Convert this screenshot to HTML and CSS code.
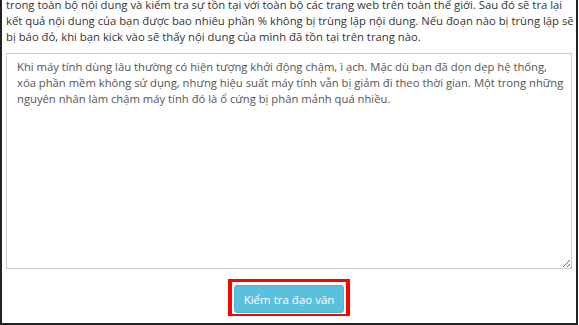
FILE: index.html
```html
<!DOCTYPE html>
<html lang="vi">
<head>
<meta charset="utf-8">
<link rel="stylesheet" href="styles.css">
</head>
<body>
<div class="frame">
  <p class="intro">trong toàn bộ nội dung và kiểm tra sự tồn tại với toàn bộ các trang web trên toàn thế giới. Sau đó sẽ tra lại<br>kết quả nội dung của bạn được bao nhiêu phần % không bị trùng lặp nội dung. Nếu đoạn nào bị trùng lặp sẽ<br>bị báo đỏ, khi bạn kick vào sẽ thấy nội dung của mình đã tồn tại trên trang nào.</p>
  <textarea class="input">Khi máy tính dùng lâu thường có hiện tượng khởi động chậm, ì ạch. Mặc dù bạn đã dọn dẹp hệ thống, xóa phần mềm không sử dụng, nhưng hiệu suất máy tính vẫn bị giảm đi theo thời gian. Một trong những nguyên nhân làm chậm máy tính đó là ổ cứng bị phân mảnh quá nhiều.</textarea>
  <div class="actions">
    <div class="highlight">
      <button class="btn">Kiểm tra đạo văn</button>
    </div>
  </div>
</div>
</body>
</html>
```

FILE: styles.css
```css
html, body {
  margin: 0;
  padding: 0;
  background: #fff;
}
body {
  width: 579px;
  height: 325px;
  overflow: hidden;
  font-family: "Open Sans", "Liberation Sans", sans-serif;
}
.frame {
  box-sizing: border-box;
  width: 578px;
  height: 325px;
  border-left: 2px solid #222;
  border-right: 2px solid #222;
  border-bottom: 2px solid #222;
  padding: 0 4px;
  display: flex;
  flex-direction: column;
  overflow: hidden;
}
.intro {
  margin: -3px 0 0 0;
  font-size: 11.3px;
  line-height: 16px;
  color: #333;
  white-space: nowrap;
}
.input {
  box-sizing: border-box;
  display: block;
  margin-top: 8px;
  width: 566px;
  height: 216px;
  border: 1px solid #ccc;
  padding: 5px 4px 5px 10px;
  font-family: "Open Sans", "Liberation Sans", sans-serif;
  font-size: 11.25px;
  line-height: 16px;
  color: #555;
  background: #fff;
  resize: both;
  outline: none;
}
.actions {
  display: flex;
  justify-content: center;
  margin-top: 10px;
}
.highlight {
  border-style: solid;
  border-color: #f00;
  border-width: 3px 4px 2px 4px;
  padding: 3px 2px 1px 2px;
  display: flex;
}
.btn {
  box-sizing: border-box;
  width: 110px;
  height: 28px;
  background: #5bc0de;
  border: 1px solid #46b8da;
  border-radius: 3px;
  color: #fff;
  font-family: "Open Sans", "Liberation Sans", sans-serif;
  font-size: 11.5px;
  padding: 0;
  cursor: pointer;
}
```
